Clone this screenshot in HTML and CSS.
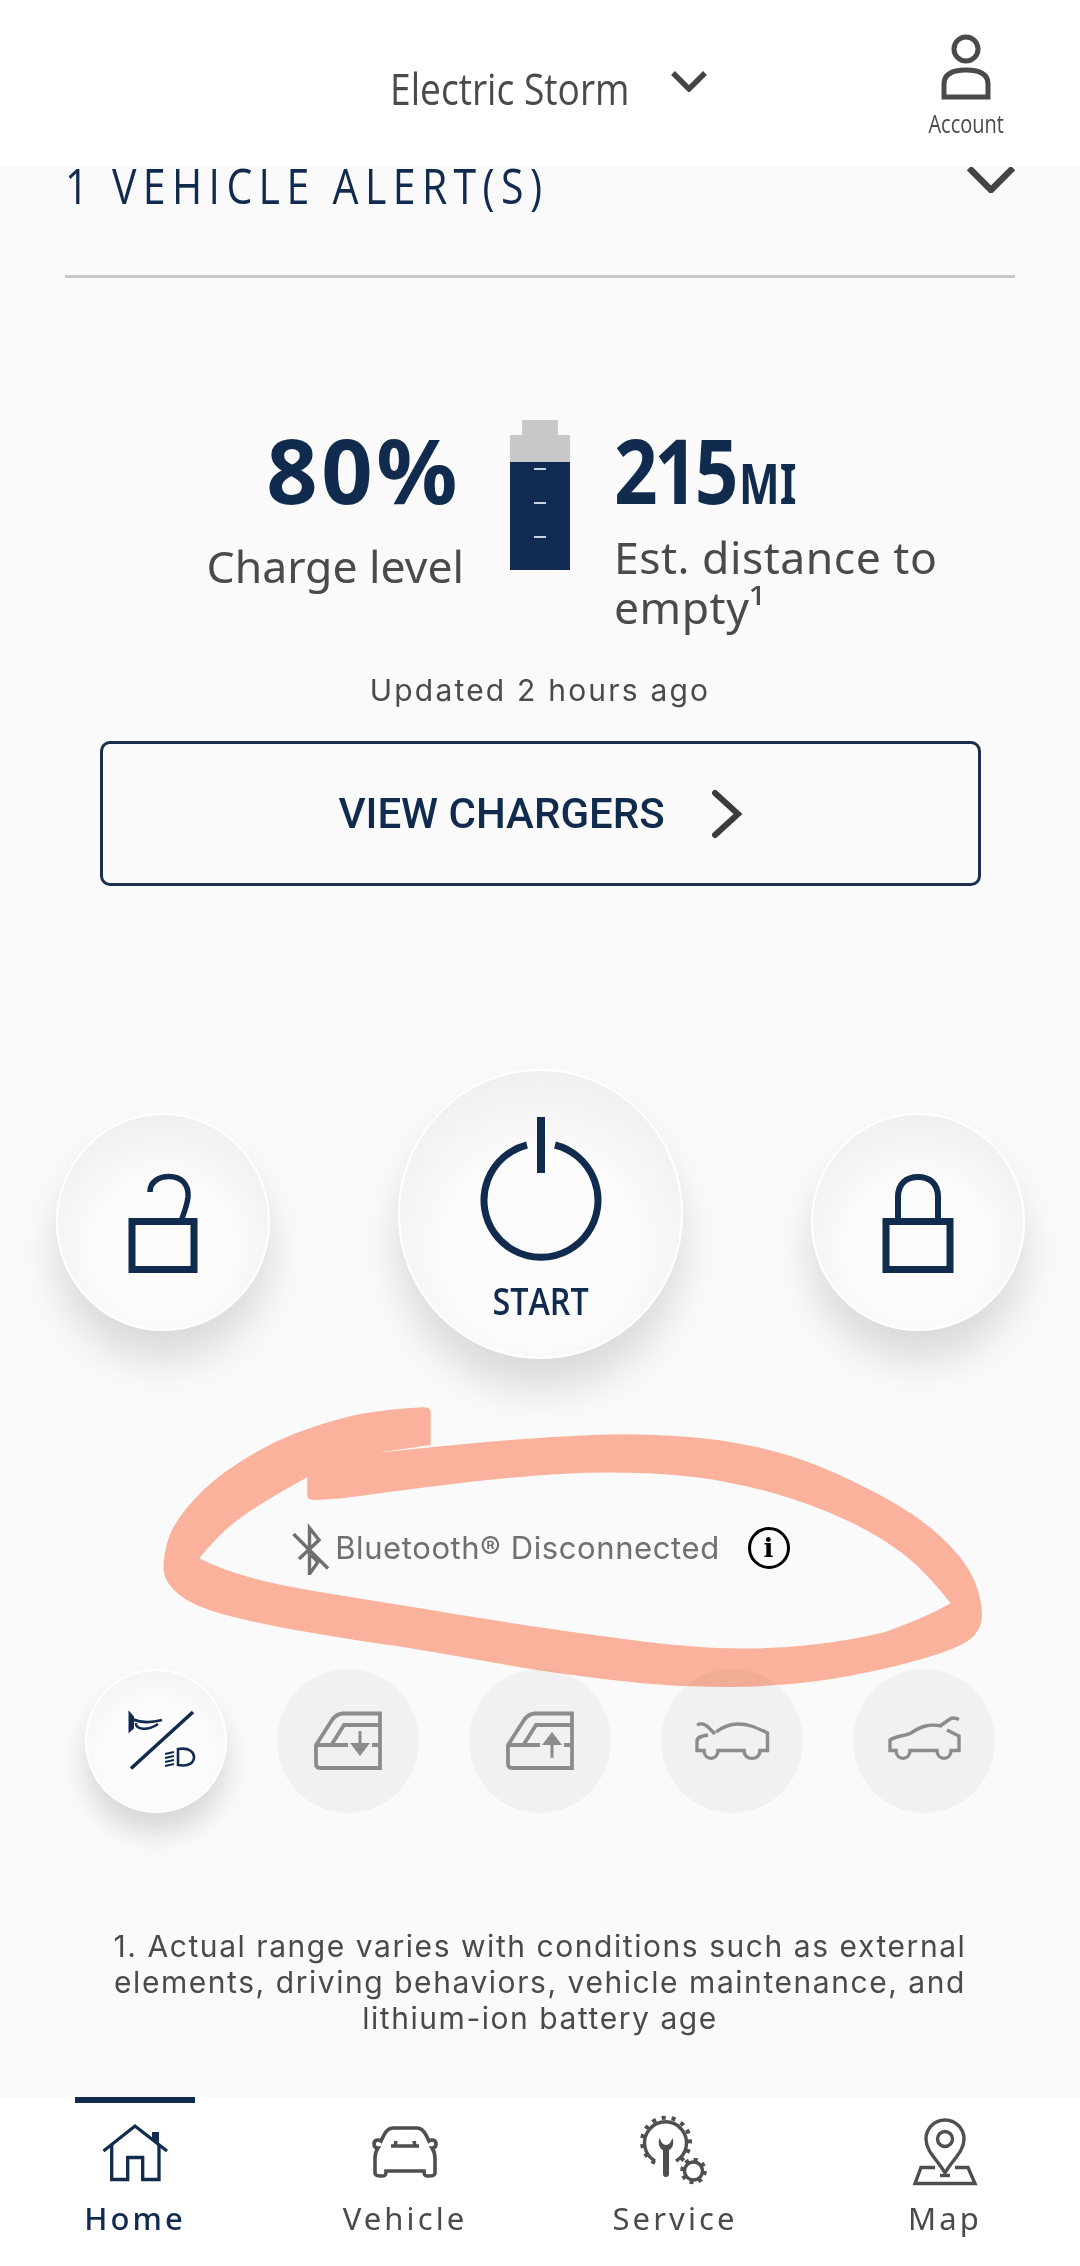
FILE: index.html
```html
<!DOCTYPE html>
<html lang="en">
<head>
  <meta charset="UTF-8" />
  <title>Electric Storm</title>
  <link rel="stylesheet" href="styles.css">
</head>
<body>

  <!-- Top bar -->
  <header class="topbar">
    <div class="vehicle-name">Electric Storm</div>
    <svg class="name-chevron" width="36" height="22" viewBox="0 0 36 22"><path d="M2 3 L18 19 L34 3" /></svg>
    <div class="account">
      <svg width="54" height="66" viewBox="0 0 54 66" fill="none" stroke="#4a4a4a" stroke-width="5">
        <circle cx="27" cy="15" r="12" />
        <path d="M5 63 V50 C5 39 15 36 27 36 C39 36 49 39 49 50 V63 Z" />
      </svg>
      <span>Account</span>
    </div>
  </header>

  <main>
    <div class="alert-row">
      <span class="alert-text">1 VEHICLE ALERT(S)</span>
      <svg class="alert-chevron" width="48" height="26" viewBox="0 0 48 26"><path d="M2 1 L24 23 L46 1" /></svg>
    </div>

    <!-- Charge -->
    <section class="stats">
      <div class="stat-left">
        <div class="stat-value">80%</div>
        <div class="stat-label">Charge level</div>
      </div>
      <div class="battery">
        <div class="battery-cap"></div>
        <div class="battery-empty"></div>
        <div class="battery-fill"><i></i><i></i><i></i></div>
      </div>
      <div class="stat-right">
        <div class="stat-value"><span class="range">215</span><small>MI</small></div>
        <div class="stat-label">Est. distance to<br>empty¹</div>
      </div>
    </section>

    <div class="updated">Updated 2 hours ago</div>

    <a class="chargers-btn">
      <span>VIEW CHARGERS</span>
      <svg width="32" height="50" viewBox="0 0 32 50"><path d="M4 4 L27 25 L4 46" /></svg>
    </a>

    <!-- Big controls -->
    <section class="controls">
      <button class="round side">
        <svg width="90" height="110" viewBox="0 0 90 110" fill="none" stroke="#112b4f">
          <rect x="14" y="48.5" width="62" height="48" stroke-width="7" />
          <path d="M32 19 C32 8 42 3.5 51 3.5 C63 3.5 71 11 70 24 C69 33 66 40 63 48" stroke-width="5.5" />
        </svg>
      </button>
      <button class="round main-btn">
        <svg width="130" height="148" viewBox="0 0 130 148" fill="none" stroke="#112b4f">
          <path d="M51 30 A57 57 0 1 0 79 30" stroke-width="7" />
          <path d="M65 2 V58" stroke-width="8" />
        </svg>
        <span>START</span>
      </button>
      <button class="round side">
        <svg width="90" height="110" viewBox="0 0 90 110" fill="none" stroke="#112b4f">
          <rect x="13" y="48.5" width="64" height="48" stroke-width="7" />
          <path d="M25 46 V24 C25 10 34 4 45 4 C56 4 65 10 65 24 V46" stroke-width="6" />
        </svg>
      </button>
    </section>

    <div class="bt-row">
      <svg class="bt-icon" width="42" height="54" viewBox="8 4 42 54" fill="none" stroke="#6f6f6f" stroke-width="3.4">
        <path d="M19 42 L39 23 L29.5 11 V57 L38 45 L31 38" />
        <path d="M13.5 17 L48 51.5" />
      </svg>
      <span>Bluetooth® Disconnected</span>
      <span class="info">i</span>
    </div>

    <!-- Small controls -->
    <section class="minis">
      <button class="mini on">
        <svg width="100" height="90" viewBox="0 0 100 90" fill="none" stroke="#112b4f">
          <path d="M87 16 L25 72.5" stroke-width="3.6" />
          <path d="M23.5 17 L27 21 V32 L23.5 35 Z" fill="#112b4f" stroke-width="2" />
          <path d="M26 23 C35 27 45 27 56 24 M30 27 C29 34 42 35 52 28" stroke-width="2.6" />
          <path d="M72 53 C84 51 88 57 88 61 C88 66 84 71 72 69 Z" stroke-width="2.6" />
          <path d="M59 58 L68 56 M59 62 L68 60 M59 66 L68 64 M59 70 L68 68" stroke-width="2.2" />
        </svg>
      </button>
      <button class="mini">
        <svg width="70" height="60" viewBox="213 15 70 60" fill="none" stroke="#8c8c8c" stroke-width="3.8">
          <path d="M280 17.5 H243 C238 17.5 235 20 232 24 L216 49 V68 C216 71 218 72 220 72 H280 Z" />
          <path d="M280 29 H244 L232 48 M216 49 H248 M272 49 H280" />
          <path d="M260 35 V50" stroke-width="3" />
          <path d="M250 47 H270 L260 60 Z" fill="#8c8c8c" stroke="none" />
        </svg>
      </button>
      <button class="mini">
        <svg width="70" height="60" viewBox="213 15 70 60" fill="none" stroke="#8c8c8c" stroke-width="3.8">
          <path d="M280 17.5 H243 C238 17.5 235 20 232 24 L216 49 V68 C216 71 218 72 220 72 H280 Z" />
          <path d="M280 29 H244 L232 48 M216 49 H248 M272 49 H280" />
          <path d="M260 46 V62" stroke-width="3" />
          <path d="M250 49 H270 L260 36 Z" fill="#8c8c8c" stroke="none" />
        </svg>
      </button>
      <button class="mini">
        <svg width="80" height="50" viewBox="12 15 80 50" fill="none" stroke="#8c8c8c" stroke-width="3.4">
          <path d="M28 34 C22 35 17 36 17 40 V49.5 H24 C24 60 38 60 38 49.5 H64 C64 60 80 60 80 49.5 H87.5 V32 C75 26 68 23 58 23 C50 23 44 25 36 31" />
          <path d="M17 24 C21 22 25 23 28 26 L35 33" />
        </svg>
      </button>
      <button class="mini">
        <svg width="80" height="50" viewBox="204 15 80 50" fill="none" stroke="#8c8c8c" stroke-width="3.4">
          <path d="M262 25 C250 23 243 24 231 32 C225 35 215 35 210 39 V49.5 H216 C216 60 230 60 230 49.5 H257 C257 60 271 60 271 49.5 H279 V35 L267 29" />
          <path d="M260 25 L270 18 C273 16 276 17 279 18.5" />
        </svg>
      </button>
    </section>

    <p class="footnote">1. Actual range varies with conditions such as external<br>elements, driving behaviors, vehicle maintenance, and<br>lithium-ion battery age</p>
  </main>

  <!-- Bottom tabs -->
  <nav class="tabs">
    <a class="tab active">
      <svg width="72" height="72" viewBox="9 5 72 72" fill="none" stroke="#112b4f" stroke-width="3.3">
        <path d="M13.5 41 L45 16 L77 41" />
        <path d="M21.7 35 V69.5 H37.7 V47.5 H52.7 V69.5 H69 V35" />
        <path d="M62 22 H69 V33 L62 28 Z" fill="#112b4f" stroke="none" />
      </svg>
      <span>Home</span>
    </a>
    <a class="tab">
      <svg width="72" height="72" viewBox="279 5 72 72" fill="none" stroke="#4f4f4f" stroke-width="3.6">
        <path d="M303 18 H327 C331 18 334 21 336 25 L339 31 C342 29 346 30 346 34 C346 37 344 38 342 38 C344 41 345 44 345 48 V63 C345 65 342 66 339 66 H337 C335 66 334 65 334 61 H296 C296 65 295 66 293 66 H291 C288 66 285 65 285 63 V48 C285 44 286 41 288 38 C286 38 284 37 284 34 C284 30 288 29 291 31 L294 25 C296 21 299 18 303 18 Z" />
        <path d="M301 36 H329 M305 36 L306 31 M325 36 L324 31" />
      </svg>
      <span>Vehicle</span>
    </a>
    <a class="tab">
      <svg width="72" height="72" viewBox="9 5 72 72" fill="none" stroke="#4f4f4f">
        <path d="M25 51 A21 21 0 1 1 46 51" stroke-width="3.4" />
        <path d="M25 53 A24 24 0 1 1 47 53" stroke-width="4" stroke-dasharray="4 5.9" />
        <path d="M36 40 V64" stroke-width="6" stroke-linecap="round" />
        <path d="M29.5 28 C27 35 31 41 36 41 C41 41 45 35 42.5 28 L40 33 Q36 37 32 33 Z" fill="#4f4f4f" stroke="none" />
        <circle cx="63.5" cy="61" r="9" stroke-width="3.4" />
        <circle cx="63.5" cy="61" r="11.5" stroke-width="3.6" stroke-dasharray="4 5" />
      </svg>
      <span>Service</span>
    </a>
    <a class="tab">
      <svg width="72" height="72" viewBox="279 5 72 72" fill="none" stroke="#4f4f4f" stroke-width="3.4">
        <path d="M315 63 C308 50 296 42 296 29 A19 19 0 0 1 334 29 C334 42 322 50 315 63 Z" />
        <circle cx="315" cy="29" r="7.5" />
        <path d="M310 65.5 H320" />
        <path d="M305 57.5 H291 L285 73.5 H345 L338 57.5 H325" />
      </svg>
      <span>Map</span>
    </a>
  </nav>

  <!-- Hand-drawn marker over the screenshot -->
  <svg class="scribble" width="860" height="320" viewBox="0 0 1568 960" preserveAspectRatio="none">
    <path fill-rule="evenodd" d="M530 165 L530 65 Q530 52 515 52 Q430 60 380 80 Q330 100 280 132 Q230 165 180 218 Q130 270 95 335 Q60 400 51 450 Q42 500 43 540 Q45 580 72 615 Q100 650 150 672 Q200 695 275 718 Q350 740 425 758 Q500 775 600 805 Q700 835 775 852 Q850 870 925 881 Q1000 892 1075 891 Q1150 890 1225 875 Q1300 860 1385 825 Q1470 790 1502 760 Q1535 730 1535 675 Q1535 620 1518 560 Q1500 500 1460 440 Q1420 380 1360 325 Q1300 270 1240 230 Q1180 190 1115 168 Q1050 145 975 138 Q900 130 825 135 Q750 140 675 150 Q600 160 530 172 L432 188 L530 165 Z M305 262 L305 318 Q305 330 320 330 L370 325 Q500 295 600 276 Q700 258 775 251 Q850 245 925 250 Q1000 255 1065 275 Q1130 295 1190 327 Q1250 360 1300 400 Q1350 440 1390 490 Q1430 540 1478 640 Q1430 685 1360 725 Q1300 750 1225 764 Q1150 778 1075 775 Q1000 772 900 751 Q800 730 700 705 Q600 680 500 652 Q400 625 325 605 Q250 585 200 562 Q150 540 108 505 Q150 420 190 375 Q230 330 305 262 Z" />
  </svg>

</body>
</html>
```

FILE: styles.css
```css
* {
  margin: 0;
  padding: 0;
  box-sizing: border-box;
}
body {
  position: relative;
  width: 1080px;
  height: 2266px;
  overflow: hidden;
  display: flex;
  flex-direction: column;
  background: #fafafa;
  font-family: 'Noto Sans', sans-serif;
  color: #4a4a4a;
}

/* Top bar */
.topbar {
  flex: none;
  height: 167px;
  background: #fff;
  display: flex;
  align-items: flex-start;
  padding-left: 390px;
}
.vehicle-name {
  font-family: 'Open Sans', sans-serif;
  font-size: 43px;
  line-height: 50px;
  margin-top: 64px;
  color: #4a4a4a;
  transform: scaleX(0.864);
  transform-origin: left center;
}
.name-chevron {
  margin: 70px 0 0 4px;
}
.name-chevron path {
  fill: none;
  stroke: #444;
  stroke-width: 5.5;
}
.account {
  margin-left: auto;
  margin-right: 74px;
  padding-top: 34px;
  display: flex;
  flex-direction: column;
  align-items: center;
  font-family: 'Open Sans', sans-serif;
  font-size: 25px;
  line-height: 30px;
  width: 80px;
}
.account span {
  margin-top: 8px;
  transform: scaleX(0.8);
}

/* Alert row */
main {
  flex: 1;
  min-height: 0;
  display: flex;
  flex-direction: column;
}
.alert-row {
  margin: 0 65px;
  height: 111px;
  border-bottom: 3px solid #c8c8c8;
  display: flex;
  justify-content: space-between;
  align-items: flex-start;
}
.alert-text {
  font-family: 'Open Sans', sans-serif;
  font-size: 50px;
  line-height: 36px;
  letter-spacing: 7.8px;
  color: #112b4f;
  white-space: nowrap;
  transform: scaleX(0.82);
  transform-origin: left center;
}
.alert-chevron path {
  fill: none;
  stroke: #444;
  stroke-width: 6.5;
}

/* Charge stats */
.stats {
  margin-top: 142px;
  display: grid;
  grid-template-columns: 1fr 60px 1fr;
  column-gap: 46px;
  padding: 0 65px;
}
.stat-value {
  font-size: 90px;
  line-height: 90px;
  font-weight: 700;
  color: #112b4f;
  letter-spacing: 3.5px;
}
.stat-value .range {
  display: inline-block;
  letter-spacing: -4px;
  transform: scaleX(0.85);
  transform-origin: left center;
}
.stat-value small {
  display: inline-block;
  font-size: 56px;
  letter-spacing: 0;
  margin-left: -17px;
  transform: scaleX(0.77);
  transform-origin: left center;
}
.stat-label {
  font-size: 44.5px;
  line-height: 50px;
  color: #4a4a4a;
}
.stat-left {
  text-align: right;
  padding-top: 4px;
}
.stat-left .stat-value {
  margin-right: 3px;
}
.stat-left .stat-label {
  margin-top: 27px;
}
.stat-right {
  padding-top: 4px;
  margin-left: -2px;
}
.stat-right .stat-value {
  margin-bottom: 5px;
}
.stat-right .stat-label {
  letter-spacing: 0.5px;
}
.battery {
  display: flex;
  flex-direction: column;
  align-items: center;
}
.battery-cap {
  width: 36px;
  height: 15px;
  background: #c8c8c8;
}
.battery-empty {
  width: 60px;
  height: 27px;
  background: #c8c8c8;
}
.battery-fill {
  width: 60px;
  height: 108px;
  background: #112b52;
  display: flex;
  flex-direction: column;
  align-items: center;
  gap: 32px;
  padding-top: 6px;
}
.battery-fill i {
  display: block;
  width: 12px;
  height: 2px;
  background: #c9d3e2;
}

.updated {
  margin-top: 38px;
  text-align: center;
  font-family: 'Inter', sans-serif;
  font-size: 30px;
  line-height: 40px;
  letter-spacing: 2.2px;
}
.chargers-btn {
  margin: 31px 99px 0 100px;
  height: 145px;
  border: 3px solid #1c2f4a;
  border-radius: 10px;
  display: flex;
  align-items: center;
  justify-content: center;
  gap: 46px;
  font-family: 'Roboto', sans-serif;
  font-size: 42px;
  font-weight: 500;
  color: #112b4f;
}

.chargers-btn svg path {
  fill: none;
  stroke: #3b3b3b;
  stroke-width: 6;
  stroke-linecap: round;
}

/* Round controls */
.controls {
  margin-top: 183px;
  padding: 0 55px 0 56px;
  display: flex;
  justify-content: space-between;
  align-items: flex-start;
}
.round {
  border: 2px solid #fff;
  border-radius: 50%;
  background: radial-gradient(circle at 50% 62%, #fbfbfb 42%, #e9e9e9 100%);
  box-shadow: 0 30px 42px rgba(0, 0, 0, 0.13);
  display: flex;
  flex-direction: column;
  align-items: center;
}
.side {
  width: 214px;
  height: 218px;
  margin-top: 44px;
  padding-top: 58px;
}
.main-btn {
  width: 285px;
  height: 290px;
  padding-top: 44px;
  font-family: 'Open Sans', sans-serif;
  font-size: 38px;
  font-weight: 600;
  color: #112b4f;
}
.main-btn span {
  line-height: 40px;
  margin-top: 17px;
  transform: scaleX(0.85);
}

.bt-row {
  margin-top: 162px;
  display: flex;
  align-items: center;
  justify-content: center;
  font-family: 'Inter', sans-serif;
  font-size: 31px;
  line-height: 54px;
  letter-spacing: 0.6px;
  color: #6f6f6f;
  padding-right: 2px;
}
.bt-icon {
  margin-right: 5px;
}
.info {
  width: 42px;
  height: 42px;
  margin-left: 28px;
  border: 3.5px solid #000;
  border-radius: 50%;
  display: flex;
  align-items: center;
  justify-content: center;
  font-family: 'DejaVu Serif', serif;
  font-size: 26px;
  font-weight: 700;
  line-height: 1;
  color: #000;
}

/* Small controls */
.minis {
  margin-top: 94px;
  padding-left: 85px;
  display: flex;
  gap: 50px;
}
.mini {
  width: 142px;
  height: 144px;
  border: none;
  border-radius: 50%;
  background: #f1f1f1;
  display: flex;
  align-items: center;
  justify-content: center;
}
.mini.on {
  background: radial-gradient(circle at 50% 60%, #fcfcfc 45%, #efefef 100%);
  border: 2px solid #fff;
  box-shadow: 0 20px 28px rgba(0, 0, 0, 0.14);
}

.footnote {
  margin-top: 115px;
  text-align: center;
  font-family: 'Inter', sans-serif;
  font-size: 30px;
  line-height: 36px;
  letter-spacing: 1.55px;
  color: #4a4a4a;
}

/* Bottom tabs */
.tabs {
  flex: none;
  height: 169px;
  background: #fff;
  display: grid;
  grid-template-columns: repeat(4, 270px);
}
.tab {
  position: relative;
  display: flex;
  flex-direction: column;
  align-items: center;
  padding-top: 18px;
  font-size: 31px;
  line-height: 40px;
  letter-spacing: 3.1px;
  color: #4a4a4a;
}
.tab span {
  margin-top: 11px;
}
.tab.active {
  color: #112b4f;
  font-weight: 500;
}
.tab.active::before {
  content: "";
  position: absolute;
  top: 0;
  left: 75px;
  width: 120px;
  height: 6px;
  background: #112b4f;
}

/* Marker stroke */
.scribble {
  position: absolute;
  left: 140px;
  top: 1390px;
  fill: #ffb69f;
  mix-blend-mode: multiply;
}
```
